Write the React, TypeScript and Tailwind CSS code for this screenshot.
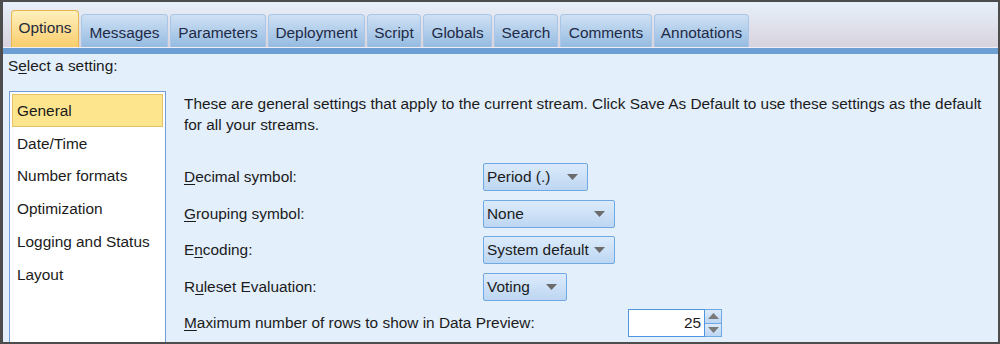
import React from 'react';

const tabs: [string, string][] = [
  ['Options', 'w-[68px]'],
  ['Messages', 'w-[87px]'],
  ['Parameters', 'w-[96px]'],
  ['Deployment', 'w-[97px]'],
  ['Script', 'w-[54px]'],
  ['Globals', 'w-[69px]'],
  ['Search', 'w-[64px]'],
  ['Comments', 'w-[92px]'],
  ['Annotations', 'w-[95px]'],
];
const settings = ['General', 'Date/Time', 'Number formats', 'Optimization', 'Logging and Status', 'Layout'];

function Caret() {
  return (
    <svg width="11" height="6" viewBox="0 0 11 6" className="shrink-0">
      <path d="M0 0h11L5.5 6z" fill="#6b6b6b" />
    </svg>
  );
}

function Combo({ value, width }: { value: string; width: string }) {
  return (
    <div
      className={`flex h-[28px] items-center justify-between rounded-[2px] border border-[#6fa9e4] bg-gradient-to-b from-[#dcebfb] to-[#bdd6f2] pl-[3px] pr-[9px] ${width}`}
    >
      <span className="whitespace-nowrap">{value}</span>
      <Caret />
    </div>
  );
}

function Label({ children }: { children: React.ReactNode }) {
  return <span className="whitespace-nowrap">{children}</span>;
}

export default function App() {
  return (
    <div
      className="flex h-[344px] w-[1000px] flex-col overflow-hidden border-2 border-l-[3px] border-[#4d4d4d] text-[15.4px] text-[#1b1b1b]"
      style={{ fontFamily: '"Liberation Sans", Arial, sans-serif' }}
    >
      {/* tab strip */}
      <div className="flex h-[45px] shrink-0 items-end gap-[2px] bg-gradient-to-b from-[#e7f0fa] to-[#d8d3de] pl-[8px]">
        {tabs.map(([t, w], i) =>
          i === 0 ? (
            <div
              key={t}
              className={`flex h-[37px] items-center justify-center rounded-t-[4px] border border-b-0 border-[#e8b64c] bg-gradient-to-b from-[#fef0bd] to-[#f9cd6a] pb-[2px] text-[#1f2a3c] ${w}`}
            >
              {t}
            </div>
          ) : (
            <div
              key={t}
              className={`flex h-[33px] items-center justify-center rounded-t-[4px] border border-b-0 border-[#a9c6e6] bg-gradient-to-b from-[#cfe1f4] to-[#95bbe1] pt-[3px] text-[#1f2a46] ${w}`}
            >
              {t}
            </div>
          ),
        )}
      </div>
      <div className="h-[1px] shrink-0 bg-[#f3eef4]" />
      <div className="h-[6px] shrink-0 bg-[#6c9fd3]" />

      {/* body */}
      <div className="flex flex-1 flex-col bg-[#e3effb]">
        <div className="pl-[5px] pt-[2px] leading-[20px]">
          S<span className="underline underline-offset-2">e</span>lect a setting:
        </div>
        <div className="mt-[15px] flex flex-1">
          <div className="ml-[6px] w-[157px] border border-b-0 border-[#6f9fd6] bg-white px-[2px] pt-[2px]">
            {settings.map((s, i) => (
              <div
                key={s}
                className={`flex h-[32.8px] items-center pl-[4px] ${
                  i === 0 ? 'border border-[#e2c36a] bg-[#fde58e]' : 'border border-transparent'
                }`}
              >
                {s}
              </div>
            ))}
          </div>

          <div className="ml-[18px] flex flex-col">
            <p className="mt-[2px] leading-[21px]">
              These are general settings that apply to the current stream. Click Save As Default to use these settings as the default
              <br />
              for all your streams.
            </p>
            <div className="mt-[28px] flex flex-col gap-[8.5px]">
              <div className="flex items-center">
                <div className="w-[299px]">
                  <Label>
                    <span className="underline underline-offset-2">D</span>ecimal symbol:
                  </Label>
                </div>
                <Combo value="Period (.)" width="w-[105px]" />
              </div>
              <div className="flex items-center">
                <div className="w-[299px]">
                  <Label>
                    <span className="underline underline-offset-2">G</span>rouping symbol:
                  </Label>
                </div>
                <Combo value="None" width="w-[132px]" />
              </div>
              <div className="flex items-center">
                <div className="w-[299px]">
                  <Label>
                    E<span className="underline underline-offset-2">n</span>coding:
                  </Label>
                </div>
                <Combo value="System default" width="w-[132px]" />
              </div>
              <div className="flex items-center">
                <div className="w-[299px]">
                  <Label>
                    R<span className="underline underline-offset-2">u</span>leset Evaluation:
                  </Label>
                </div>
                <Combo value="Voting" width="w-[84px]" />
              </div>
              <div className="flex items-center">
                <div className="w-[444px]">
                  <Label>
                    <span className="underline underline-offset-2">M</span>aximum number of rows to show in Data Preview:
                  </Label>
                </div>
                <div className="flex h-[28px]">
                  <div className="flex w-[77px] items-center justify-end border border-[#4f95e0] bg-white pr-[3px]">25</div>
                  <div className="flex w-[17px] flex-col border border-l-0 border-[#6fa9e4]">
                    <div className="flex flex-1 items-center justify-center border-b border-[#6fa9e4] bg-gradient-to-b from-[#dcebfb] to-[#bdd6f2]">
                      <svg width="11" height="6" viewBox="0 0 11 6">
                        <path d="M0 6h11L5.5 0z" fill="#7a7a7a" />
                      </svg>
                    </div>
                    <div className="flex flex-1 items-center justify-center bg-gradient-to-b from-[#dcebfb] to-[#bdd6f2]">
                      <svg width="11" height="6" viewBox="0 0 11 6">
                        <path d="M0 0h11L5.5 6z" fill="#7a7a7a" />
                      </svg>
                    </div>
                  </div>
                </div>
              </div>
            </div>
          </div>
        </div>
      </div>
    </div>
  );
}
